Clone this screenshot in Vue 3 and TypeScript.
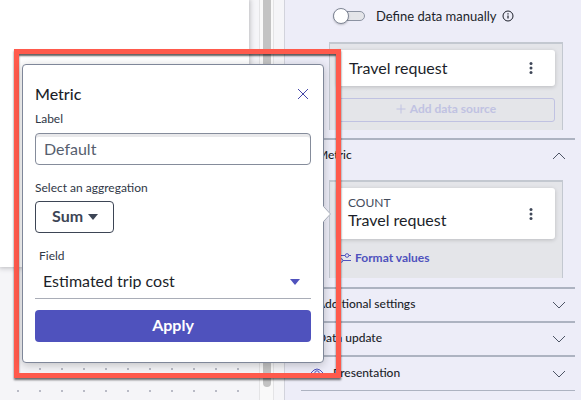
<script setup lang="ts">
import { ref } from 'vue'

const manual = ref(false)
const label = ref('')
const aggregation = ref('Sum')
const field = ref('Estimated trip cost')
const collapsed = ['Additional settings', 'Data update']
</script>

<template>
  <main class="editor">
    <section class="workspace" aria-label="Canvas">
      <div class="canvas"><div class="page"></div></div>
      <div class="track"><div class="thumb"></div></div>
    </section>

    <aside class="panel">
      <div class="manual">
        <label class="switch-label">
          <input v-model="manual" class="switch" type="checkbox" role="switch" />
          <span>Define data manually</span>
        </label>
        <svg class="info" viewBox="0 0 12 12" aria-hidden="true">
          <circle cx="6" cy="6" r="5" fill="none" stroke="currentColor" />
          <path d="M6 5.4v3.2M6 3.2v1.2" stroke="currentColor" stroke-width="1.2" />
        </svg>
      </div>

      <div class="well source">
        <div class="card">
          <span class="card-title">Travel request</span>
          <button class="more" type="button" aria-label="Data source options">
            <svg viewBox="0 0 4 14"><circle cx="2" cy="2.4" r="1.5" /><circle cx="2" cy="7" r="1.5" /><circle cx="2" cy="11.6" r="1.5" /></svg>
          </button>
        </div>
        <button class="add" type="button" disabled>
          <svg viewBox="0 0 10 10" aria-hidden="true"><path d="M5 0.5v9M0.5 5h9" stroke="currentColor" /></svg>
          Add data source
        </button>
      </div>

      <section class="group open">
        <button class="group-head" type="button" aria-expanded="true">
          <span>Metric</span>
          <svg class="chevron" viewBox="0 0 14 8" aria-hidden="true"><path d="M1 7l6-6 6 6" /></svg>
        </button>
        <div class="well metric">
          <div class="card tall">
            <div class="stack">
              <span class="func">COUNT</span>
              <span class="card-title">Travel request</span>
            </div>
            <button class="more" type="button" aria-label="Metric options">
              <svg viewBox="0 0 4 14"><circle cx="2" cy="2.4" r="1.5" /><circle cx="2" cy="7" r="1.5" /><circle cx="2" cy="11.6" r="1.5" /></svg>
            </button>
          </div>
          <button class="format" type="button">
            <svg viewBox="0 0 14 10" aria-hidden="true"><path d="M0 2.5h8M12 2.5h2M0 7.5h2M6 7.5h8" /><circle cx="10" cy="2.5" r="1.8" /><circle cx="4" cy="7.5" r="1.8" /></svg>
            Format values
          </button>
        </div>
      </section>

      <section v-for="name in collapsed" :key="name" class="group">
        <button class="group-head" type="button" aria-expanded="false">
          <span>{{ name }}</span>
          <svg class="chevron" viewBox="0 0 14 8" aria-hidden="true"><path d="M1 1l6 6 6-6" /></svg>
        </button>
      </section>
      <section class="group last">
        <button class="group-head" type="button" aria-expanded="false">
          <svg class="eye" viewBox="0 0 14 10" aria-hidden="true"><path d="M1 5Q7-3 13 5Q7 13 1 5Z" /><circle cx="7" cy="5" r="2.2" /></svg>
          <span>Presentation</span>
          <svg class="chevron" viewBox="0 0 14 8" aria-hidden="true"><path d="M1 1l6 6 6-6" /></svg>
        </button>
      </section>
    </aside>

    <div class="highlight">
      <form class="popup" @submit.prevent>
        <header class="popup-head">
          <h2>Metric</h2>
          <button class="close" type="button" aria-label="Close">
            <svg viewBox="0 0 12 12"><path d="M1 1l10 10M11 1L1 11" /></svg>
          </button>
        </header>
        <label class="caption" for="metric-label">Label</label>
        <input id="metric-label" v-model="label" class="text" type="text" placeholder="Default" />
        <label class="caption agg" for="metric-agg">Select an aggregation</label>
        <div class="pick sum">
          <select id="metric-agg" v-model="aggregation"><option>Sum</option></select>
          <svg viewBox="0 0 10 6" aria-hidden="true"><path d="M0 0h10L5 6z" /></svg>
        </div>
        <label class="caption field" for="metric-field">Field</label>
        <div class="pick cost">
          <select id="metric-field" v-model="field"><option>Estimated trip cost</option></select>
          <svg viewBox="0 0 10 6" aria-hidden="true"><path d="M0 0h10L5 6z" /></svg>
        </div>
        <button class="apply" type="submit">Apply</button>
        <svg class="pointer" viewBox="0 0 8 16" aria-hidden="true"><path d="M0 0L8 8L0 16z" fill="#fff" /><path d="M0.5 0.5L7.5 8L0.5 15.5" fill="none" stroke="#a3a9b6" /></svg>
      </form>
    </div>
  </main>
</template>

<style>
body {
  margin: 0;
}
</style>

<style scoped>
* {
  box-sizing: border-box;
}
.editor {
  position: relative;
  display: flex;
  height: 100vh;
  overflow: hidden;
  font-family: Lato, "Liberation Sans", sans-serif;
  font-size: 12px;
  line-height: 16px;
  color: #1c1f2a;
}
button,
input,
select {
  margin: 0;
  font: inherit;
  color: inherit;
}
button {
  padding: 0;
  border: 0;
  background: none;
}
svg {
  display: block;
  flex: none;
}
.workspace {
  display: flex;
  flex: 1;
  min-width: 0;
  background: #f5f5f8;
}
.canvas {
  flex: 1;
  padding-right: 10px;
  background: radial-gradient(circle, #b9bbc6 0, #b9bbc6 1px, transparent 1px) 7px 6px / 22px 22px #f5f5f8;
}
.page {
  height: 267px;
  background: #fff;
  box-shadow: 0 0 5px 1px #b8b8bc;
}
.track {
  width: 15px;
  margin-right: 10px;
  padding: 0 3px;
  border: solid #e4e4e6;
  border-width: 0 1px;
  background: #f9f9f9;
}
.thumb {
  height: 387px;
  width: 8px;
  border-radius: 0 0 4px 4px;
  background: #c3c3c3;
}
.panel {
  flex: 0 0 297px;
  padding: 6px 6px 0 16px;
  border-left: 1px solid #d2d3dc;
  background: #ededf8;
}
.manual {
  display: flex;
  align-items: center;
  gap: 5px;
  height: 20px;
  padding-left: 32px;
}
.switch-label {
  display: flex;
  align-items: center;
  gap: 11px;
  font-size: 13px;
}
.switch {
  display: flex;
  align-items: center;
  appearance: none;
  width: 32px;
  height: 10px;
  border: 1px solid #8c93a2;
  border-radius: 5px;
  background: #e4e5e9;
}
.switch::before {
  content: "";
  flex: none;
  width: 16px;
  height: 16px;
  margin-left: -1px;
  border: 1px solid #7f8696;
  border-radius: 50%;
  background: #fff;
  box-shadow: 0 1px 2px #0003;
  box-sizing: border-box;
}
.info {
  width: 12px;
  height: 12px;
}
.well {
  margin: 0 12px 0 28px;
  padding: 6px 7px 0;
  border: solid #c3c8d0;
  border-width: 2px 1px 0;
  background: #e4e5e9;
}
.source {
  height: 88px;
  margin-top: 16px;
}
.card {
  display: flex;
  align-items: center;
  justify-content: space-between;
  height: 36px;
  padding: 0 20px 0 12px;
  border-radius: 3px;
  background: #fff;
  box-shadow: 0 1px 4px #0000002e;
}
.card-title {
  font-size: 16px;
  line-height: 18px;
}
.tall {
  height: 51px;
  padding-left: 11px;
}
.stack {
  display: flex;
  flex-direction: column;
  padding-bottom: 4px;
}
.func {
  color: #434b5c;
}
.more {
  width: 8px;
  padding: 0 2px;
}
.more svg {
  width: 4px;
  height: 14px;
  fill: #3f4758;
}
.add {
  display: flex;
  align-items: center;
  justify-content: center;
  gap: 4px;
  width: 100%;
  height: 24px;
  margin-top: 12px;
  padding-bottom: 2px;
  border: 1px solid #c0c2e2;
  border-radius: 3px;
  font-weight: 700;
  color: #c0c2e2;
}
.add svg {
  width: 10px;
  height: 10px;
}
.group {
  border-top: 2px solid #adb3c1;
}
.source + .group {
  margin-top: 8px;
}
.group-head {
  display: flex;
  align-items: center;
  width: 100%;
  height: 32px;
  padding: 0 9px 2px 16px;
  font-weight: 500;
}
.open {
  padding-bottom: 9px;
}
.open .group-head {
  margin-bottom: 8px;
}
.chevron {
  width: 14px;
  height: 8px;
  margin: 2px 0 0 auto;
  fill: none;
  stroke: #4d5565;
}
.metric {
  height: 98px;
}
.format {
  display: flex;
  align-items: center;
  gap: 4px;
  height: 16px;
  margin-top: 11px;
  font-weight: 700;
  color: #4f52bd;
}
.format svg {
  width: 14px;
  height: 10px;
  fill: none;
  stroke: currentColor;
}
.last {
  border-bottom: 1px solid #adb3c1;
}
.last .group-head {
  height: 33px;
  padding-left: 9px;
}
.eye {
  width: 14px;
  height: 10px;
  margin-right: 9px;
  fill: none;
  stroke: #4f52bd;
}
.highlight {
  position: absolute;
  top: 49px;
  right: 240px;
  width: 327px;
  padding: 10px 12px 10px 3px;
  border: 5px solid #ff5a4c;
  box-shadow: 0 2px 2px #00000090, inset 0 2px 2px #000000a0;
}
.popup {
  position: relative;
  display: flex;
  flex-direction: column;
  height: 299px;
  padding: 20px 12px;
  border: 1px solid #7f8799;
  border-radius: 4px;
  background: #fff;
  box-shadow: 0 2px 10px #00000038;
}
.popup-head {
  display: flex;
  align-items: center;
  justify-content: space-between;
  height: 18px;
  margin-bottom: 8px;
}
h2 {
  margin: 0;
  font-size: 16px;
  font-weight: 500;
  line-height: 18px;
}
.close {
  width: 12px;
  height: 12px;
  margin-right: 2px;
}
.close svg {
  width: 12px;
  height: 12px;
  stroke: #4547a8;
}
.caption {
  color: #303746;
}
.text {
  height: 32px;
  margin-top: 6px;
  padding: 0 8px 2px;
  border: 1px solid #858c9b;
  border-radius: 4px;
  background: #fff;
  box-shadow: inset 0 3px #e9e9eb;
  font-size: 16px;
}
.text::placeholder {
  color: #565e6e;
  opacity: 1;
}
.agg {
  margin-top: 15px;
}
.pick {
  display: grid;
  align-items: center;
}
.pick select,
.pick svg {
  grid-area: 1 / 1;
}
.pick select {
  appearance: none;
  width: 100%;
  height: 32px;
  border: 0;
  background: none;
  font-size: 16px;
}
.pick svg {
  justify-self: end;
  width: 12px;
  height: 6px;
  pointer-events: none;
}
.sum {
  width: 79px;
  margin-top: 5px;
  color: #3d4555;
}
.sum select {
  padding: 0 0 2px 16px;
  border: 1px solid #3d4555;
  border-radius: 4px;
  font-weight: 700;
}
.sum svg {
  margin-right: 15px;
  fill: #3d4555;
}
.field {
  margin: 15px 0 0 4px;
}
.cost {
  margin-top: 2px;
  border-bottom: 1px solid #a9adb7;
}
.cost select {
  padding: 0 8px 2px;
}
.cost svg {
  margin-right: 10px;
  fill: #4f52bd;
}
.apply {
  height: 32px;
  margin-top: 11px;
  padding-bottom: 2px;
  border-radius: 4px;
  background: #4f52bd;
  font-size: 16px;
  font-weight: 700;
  color: #fff;
}
.pointer {
  position: absolute;
  top: 141px;
  right: -8px;
  width: 8px;
  height: 16px;
}
</style>
